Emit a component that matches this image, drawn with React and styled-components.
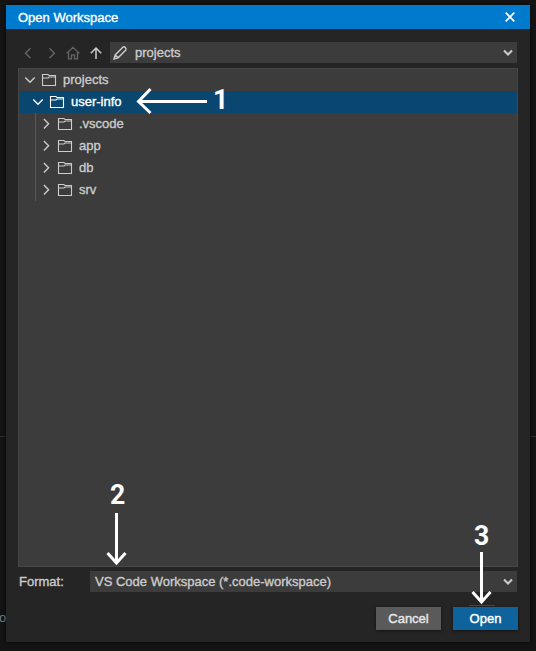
import React from "react";
import styled, { createGlobalStyle, css } from "styled-components";

const Global = createGlobalStyle`
  * { box-sizing: border-box; }
  body {
    margin: 0;
    background: #151515;
    font-family: "Liberation Sans", Arial, sans-serif;
    font-size: 13px;
    color: #ccc;
    overflow: hidden;
  }
`;

const Page = styled.div`
  position: relative;
  height: 651px;
  padding: 5px 6px 9px;
  background: linear-gradient(#303030, #303030) 0 436px / 100% 1px no-repeat, #151515;
`;

const BackgroundText = styled.span`
  position: absolute;
  left: -1px;
  top: 610px;
  line-height: 16px;
  color: #7f8b98;
`;

const Dialog = styled.section`
  position: relative;
  display: flex;
  flex-direction: column;
  height: 637px;
  background: #252526;
  box-shadow: 0 0 6px rgba(0, 0, 0, 0.7);
`;

const Header = styled.header`
  display: flex;
  align-items: center;
  justify-content: space-between;
  height: 24px;
  padding: 0 14px 0 12px;
  background: #007acc;
  color: #fff;
  -webkit-text-stroke: 0.35px;
`;

const Body = styled.div`
  display: flex;
  flex-direction: column;
  padding: 13px 12px 0;
  -webkit-text-stroke: 0.35px;
`;

const Toolbar = styled.div`
  display: flex;
  align-items: center;
  height: 21px;
  margin-bottom: 5px;
`;

const IconSlot = styled.span`
  display: flex;
  justify-content: center;
  width: ${(p) => p.$width || 23}px;
  color: ${(p) => (p.$muted ? "#666" : "inherit")};
`;

const Select = styled.div`
  display: flex;
  align-items: center;
  gap: 7px;
  flex: 1;
  height: 21px;
  margin-right: 1px;
  padding: 0 4px 0 ${(p) => p.$inset}px;
  background: #3c3c3c;
`;

const SelectLabel = styled.span`
  flex: 1;
`;

const Tree = styled.div`
  height: 499px;
  border: 1px solid #474747;
  background: #3c3c3c;
`;

const Row = styled.div`
  display: flex;
  align-items: center;
  height: 22px;
  padding-left: ${(p) => 3 + p.$depth * 8}px;
  ${(p) => p.$depth === 2 && css`
    margin-left: 16px;
    padding-left: 2px;
    border-left: 1px solid #585858;
  `}
  ${(p) => p.$selected && css`
    background: #094771;
    color: #fff;
  `}
`;

const RowLabel = styled.span`
  margin-left: 3px;
  padding-bottom: 2px;
`;

const FormatRow = styled.div`
  display: flex;
  align-items: center;
  height: 21px;
  margin-top: 4px;
`;

const FormatLabel = styled.span`
  width: 72px;
  padding-left: 1px;
`;

const Actions = styled.div`
  display: flex;
  justify-content: flex-end;
  gap: 12px;
  margin-top: 15px;
`;

const Button = styled.button`
  width: 65px;
  height: 23px;
  padding: 0;
  border: 0;
  font: inherit;
  color: ${(p) => (p.$primary ? "#fff" : "#e8e8e8")};
  background: ${(p) => (p.$primary ? "#0e639c" : "#5a5a5a")};
  box-shadow: 0 1px 3px rgba(0, 0, 0, 0.5);
  -webkit-text-stroke: 0.4px;
`;

const ButtonMark = styled.span`
  position: absolute;
  left: 463px;
  top: 600px;
  width: 26px;
  height: 1px;
  background: #474747;
`;

const Arrows = styled.svg`
  position: absolute;
  left: 0;
  top: 0;
  pointer-events: none;
`;

const Step = styled.span`
  position: absolute;
  left: ${(p) => p.$x}px;
  top: ${(p) => p.$y}px;
  font-family: Roboto, "Liberation Sans", sans-serif;
  font-size: 28px;
  line-height: 30px;
  font-weight: bold;
  color: #fff;
  transform: scaleX(0.95);
  transform-origin: left;
`;

const Svg = ({ w = 16, h = 16, sw = 1.1, children }) => (
  <svg width={w} height={h} viewBox={`0 0 ${w} ${h}`} fill="none" stroke="currentColor" strokeWidth={sw}>
    {children}
  </svg>
);

const Twistie = ({ open }) => (
  <Svg sw={1.4}><path d={open ? "M3.3 5.6 8 10.3 12.7 5.6" : "M5.9 3.1 10.6 7.8 5.9 12.5"} /></Svg>
);
const Folder = () => (
  <Svg><path d="M1.5 2.5h5.3l1.3 1h6.4v10h-13z M1.5 6h5.4l1.2-1h6.4" /></Svg>
);
const Caret = () => (
  <Svg w={10} h={10} sw={2}><path d="M1 2.5 5 6.5 9 2.5" /></Svg>
);

const nodes = [
  { name: "projects", depth: 0, open: true },
  { name: "user-info", depth: 1, open: true, selected: true },
  { name: ".vscode", depth: 2 },
  { name: "app", depth: 2 },
  { name: "db", depth: 2 },
  { name: "srv", depth: 2 },
];

export default function App() {
  return (
    <Page>
      <Global />
      <BackgroundText>o</BackgroundText>
      <Dialog>
        <Header>
          <span>Open Workspace</span>
          <Svg w={12} h={12} sw={1.7}><path d="M1.7 1.7 10.3 10.3 M10.3 1.7 1.7 10.3" /></Svg>
        </Header>
        <Body>
          <Toolbar>
            <IconSlot $muted $width={20}><Svg sw={1.4}><path d="M10.4 3.3 5.5 8.2 10.4 13.1" /></Svg></IconSlot>
            <IconSlot $muted $width={26}><Svg sw={1.4}><path d="M6.5 3.3 11.4 8.2 6.5 13.1" /></Svg></IconSlot>
            <IconSlot $muted $width={18}><Svg sw={1.3}><path d="M1.6 8.4 8 2.4 14.4 8.4 M3.5 7v6.9h3v-4h3v4h3V7" /></Svg></IconSlot>
            <IconSlot $width={28}><Svg sw={1.5}><path d="M8 14V3 M2.8 8.2 8 3 13.2 8.2" /></Svg></IconSlot>
            <Select $inset={2}>
              <Svg sw={1.4}><path d="M2 14 3.2 9.9 10.8 2.2Q12 1.2 13.3 2.5T13.8 5L6.1 12.8Z M3.2 9.9 6.1 12.8" /></Svg>
              <SelectLabel>projects</SelectLabel>
              <Caret />
            </Select>
          </Toolbar>
          <Tree>
            {nodes.map((n) => (
              <Row key={n.name} $depth={n.depth} $selected={n.selected}>
                <Twistie open={n.open} />
                <IconSlot $width={22}><Folder /></IconSlot>
                <RowLabel>{n.name}</RowLabel>
              </Row>
            ))}
          </Tree>
          <FormatRow>
            <FormatLabel>Format:</FormatLabel>
            <Select $inset={5}>
              <SelectLabel>VS Code Workspace (*.code-workspace)</SelectLabel>
              <Caret />
            </Select>
          </FormatRow>
          <Actions>
            <Button>Cancel</Button>
            <Button $primary>Open</Button>
          </Actions>
        </Body>
        <ButtonMark />
      </Dialog>
      <Arrows width="536" height="651" fill="none" stroke="#fff" strokeWidth="3">
        <path d="M207 101.5H139 M150.5 89 138.5 101.5 150.5 113" />
        <path d="M116.5 513V563 M107.5 553 116.5 563 125.5 553" />
        <path d="M481.5 552V602 M472.5 592 481.5 602 490.5 592" />
      </Arrows>
      <Step $x={213} $y={85}>1</Step>
      <Step $x={110} $y={480}>2</Step>
      <Step $x={474} $y={521}>3</Step>
    </Page>
  );
}
